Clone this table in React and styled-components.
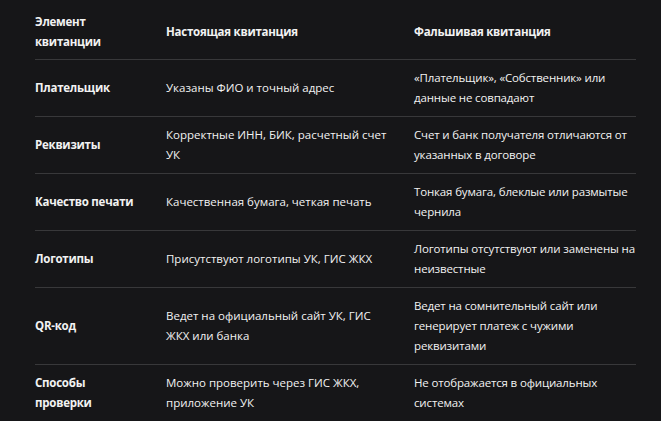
import styled, { createGlobalStyle } from "styled-components";

const GlobalStyle = createGlobalStyle`
  html, body {
    margin: 0;
    padding: 0;
    background: #161618;
  }
`;

const Page = styled.div`
  padding: 0 0 0 35px;
  font-family: "Open Sans", "Noto Sans", sans-serif;
  font-size: 11.5px;
  line-height: 20px;
  color: #f2f2f2;
`;

const Table = styled.div`
  display: grid;
  grid-template-columns: 131px 248px 222px;
  width: 601px;
`;

const Cell = styled.div`
  display: flex;
  align-items: center;
  min-width: 0;
  padding: ${(p) => (p.head ? "12px 12px 7px 0" : "8px 12px 8px 0")};
  border-bottom: ${(p) => (p.last ? "none" : "1px solid #38383a")};
  font-weight: ${(p) => (p.bold ? 700 : 400)};
  letter-spacing: ${(p) => (p.bold ? "-0.25px" : "0")};
  &:nth-child(3n + 1) {
    padding-right: 32px;
  }
  &:nth-child(3n + 2) {
    padding-right: 26px;
  }
  &:nth-child(3n) {
    padding-right: 0;
    letter-spacing: ${(p) => (p.bold ? "-0.25px" : "-0.15px")};
  }
`;

const rows = [
  [
    "Плательщик",
    "Указаны ФИО и точный адрес",
    "«Плательщик», «Собственник» или данные не совпадают",
  ],
  [
    "Реквизиты",
    "Корректные ИНН, БИК, расчетный счет УК",
    "Счет и банк получателя отличаются от указанных в договоре",
  ],
  [
    "Качество печати",
    "Качественная бумага, четкая печать",
    "Тонкая бумага, блеклые или размытые чернила",
  ],
  [
    "Логотипы",
    "Присутствуют логотипы УК, ГИС ЖКХ",
    "Логотипы отсутствуют или заменены на неизвестные",
  ],
  [
    "QR-код",
    "Ведет на официальный сайт УК, ГИС ЖКХ или банка",
    "Ведет на сомнительный сайт или генерирует платеж с чужими реквизитами",
  ],
  [
    "Способы проверки",
    "Можно проверить через ГИС ЖКХ, приложение УК",
    "Не отображается в официальных системах",
  ],
];

const App = () => {
  return (
    <>
      <GlobalStyle />
      <Page>
        <Table>
          <Cell head bold>Элемент квитанции</Cell>
          <Cell head bold>Настоящая квитанция</Cell>
          <Cell head bold>Фальшивая квитанция</Cell>
          {rows.map((row, i) =>
            row.map((text, j) => (
              <Cell
                key={i + "-" + j}
                bold={j === 0}
                last={i === rows.length - 1}
              >
                {text}
              </Cell>
            ))
          )}
        </Table>
      </Page>
    </>
  );
};

export default App;
